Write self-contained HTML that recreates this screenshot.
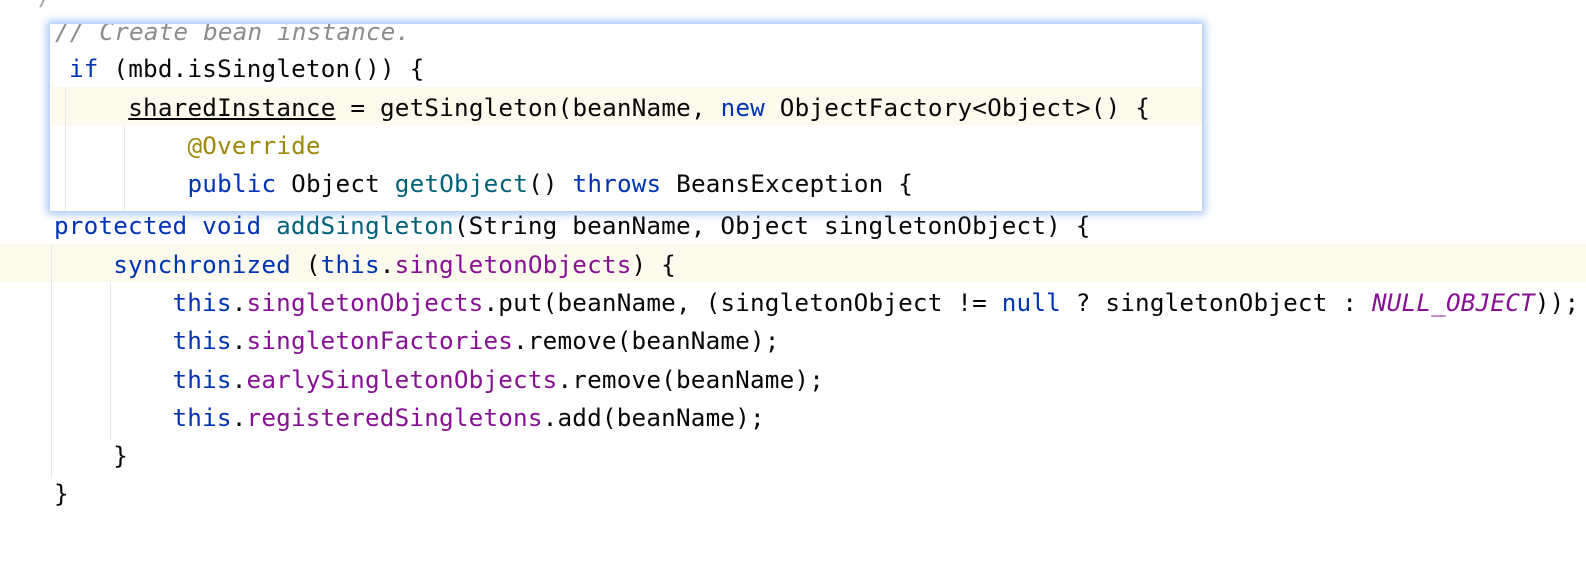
<!DOCTYPE html>
<html><head><meta charset="utf-8"><style>
html,body{margin:0;padding:0;width:1586px;height:572px;overflow:hidden;background:#fff;}
.l{position:absolute;white-space:pre;font-family:"DejaVu Sans Mono","Liberation Mono",monospace;font-size:24.3px;line-height:38px;height:38px;color:#080808;letter-spacing:0.18px}
.k{color:#0033b3}.f{color:#871094}.m{color:#00627a}.a{color:#9e880d}.c{color:#8c8c8c;font-style:italic}
.i{font-style:italic}
.hl{position:absolute;background:#fcfaed;}
.g{position:absolute;width:1px;background:#e8e8e8;}
#pop{position:absolute;left:50px;top:24px;width:1152px;height:187px;background:#fff;overflow:hidden;box-shadow:0 0 8px 3px rgba(90,150,240,0.55);}
</style></head><body>
<div class="l" style="left:38px;top:-22px;color:#aaa">/</div>
<div class="hl" style="left:0;top:244px;width:1586px;height:38px"></div>
<div class="g" style="left:51px;top:244px;height:234px"></div>
<div class="g" style="left:110px;top:283px;height:157px"></div>
<div class="l" style="left:54px;top:207px"><span class="k">protected void </span><span class="m">addSingleton</span>(String beanName, Object singletonObject) {</div>
<div class="l" style="left:54px;top:246px">    <span class="k">synchronized</span> (<span class="k">this</span>.<span class="f">singletonObjects</span>) {</div>
<div class="l" style="left:54px;top:284px">        <span class="k">this</span>.<span class="f">singletonObjects</span>.put(beanName, (singletonObject != <span class="k">null</span> ? singletonObject : <span class="f i">NULL_OBJECT</span>));</div>
<div class="l" style="left:54px;top:322px">        <span class="k">this</span>.<span class="f">singletonFactories</span>.remove(beanName);</div>
<div class="l" style="left:54px;top:361px">        <span class="k">this</span>.<span class="f">earlySingletonObjects</span>.remove(beanName);</div>
<div class="l" style="left:54px;top:399px">        <span class="k">this</span>.<span class="f">registeredSingletons</span>.add(beanName);</div>
<div class="l" style="left:54px;top:437px">    }</div>
<div class="l" style="left:54px;top:475px">}</div>
<div id="pop">
<div class="hl" style="left:0;top:63px;width:1152px;height:38px"></div>
<div class="g" style="left:15px;top:63px;height:130px"></div>
<div class="g" style="left:74px;top:101px;height:90px"></div>
<div class="l c" style="left:5px;top:-11px">// Create bean instance.</div>
<div class="l" style="left:19px;top:26px"><span class="k">if</span> (mbd.isSingleton()) {</div>
<div class="l" style="left:19px;top:65px">    <span style="text-decoration:underline">sharedInstance</span> = getSingleton(beanName, <span class="k">new</span> ObjectFactory&lt;Object&gt;() {</div>
<div class="l" style="left:19px;top:103px">        <span class="a">@Override</span></div>
<div class="l" style="left:19px;top:141px">        <span class="k">public</span> Object <span class="m">getObject</span>() <span class="k">throws</span> BeansException {</div>
</div>
</body></html>
